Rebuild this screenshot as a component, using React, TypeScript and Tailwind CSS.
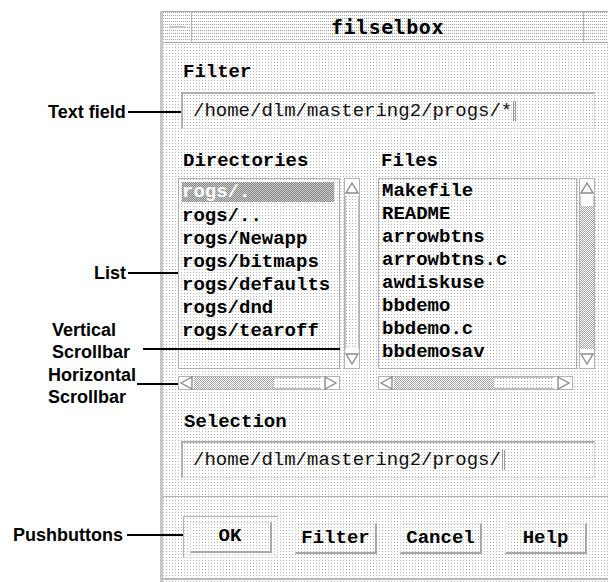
import React from 'react'

const mono = "font-['Liberation_Mono','Courier_New',monospace]"
const dots = 'bg-white bg-[conic-gradient(at_1px_1px,transparent_75%,#b4b4b4_0)] bg-[length:3px_3px]'
const dense = 'bg-white bg-[conic-gradient(at_1px_1px,transparent_75%,#a2a2a2_0)] bg-[length:2px_3px]'
const trough = 'bg-[repeating-conic-gradient(#a4a4a4_0_25%,#ffffff_0_50%)] bg-[length:2px_2px]'
const callout = "font-['Liberation_Sans',Arial,sans-serif] font-bold text-[18px] leading-[17px] text-black"

type Dir = 'up' | 'down' | 'left' | 'right'

function Arrow({ dir }: { dir: Dir }) {
  const pts = {
    up: '7,2 13,12 1,12',
    down: '1,2 13,2 7,12',
    left: '1,7 12,1 12,13',
    right: '2,1 13,7 2,13',
  }[dir]
  return (
    <svg width="14" height="14" viewBox="0 0 14 14">
      <polygon points={pts} fill="#ffffff" stroke="#8c8c8c" strokeWidth="1.4" />
    </svg>
  )
}

function VScroll({ full }: { full?: boolean }) {
  return (
    <div className="flex flex-col w-[16px] h-full border border-[#b3b3b3]">
      <div className="h-[17px] flex items-center justify-center bg-white">
        <Arrow dir="up" />
      </div>
      {full ? (
        <div className={`flex-1 ${dots} border-x border-[#c4c4c4]`} />
      ) : (
        <>
          <div className="h-[10px] bg-white border-x border-[#c4c4c4]" />
          <div className={`flex-1 ${trough}`} />
        </>
      )}
      <div className="h-[19px] flex items-center justify-center bg-white">
        <Arrow dir="down" />
      </div>
    </div>
  )
}

function HScroll({ width, before, slider }: { width: number; before: number; slider: number }) {
  return (
    <div className="flex h-[14px] border border-[#b3b3b3]" style={{ width }}>
      <div className="w-[15px] flex items-center justify-center bg-white">
        <Arrow dir="left" />
      </div>
      <div className={trough} style={{ width: before }} />
      <div className={`${dots} border-y border-[#c4c4c4]`} style={{ width: slider }} />
      <div className="flex-1 flex items-center justify-center bg-white">
        <Arrow dir="right" />
      </div>
    </div>
  )
}

function Field({ value }: { value: string }) {
  return (
    <div
      className={`ml-[3px] w-[414px] h-[37px] flex items-center pl-[10px] border-t-2 border-l-2 border-[#b0b0b0] border-r border-b border-r-[#dcdcdc] border-b-[#dcdcdc] ${mono} text-[19px] text-[#111]`}
    >
      <span className="whitespace-pre">{value}</span>
      <span className="inline-block w-[3px] h-[20px] border-x border-[#9a9a9a] ml-px" />
    </div>
  )
}

function Button({ label }: { label: string }) {
  return (
    <div
      className={`w-[82px] h-[31px] flex items-center justify-center border-t border-l border-[#e6e6e6] border-r-2 border-b-2 border-r-[#a8a8a8] border-b-[#a8a8a8] ${mono} font-bold text-[19px]`}
    >
      {label}
    </div>
  )
}

export default function App() {
  const dirs = ['rogs/.', 'rogs/..', 'rogs/Newapp', 'rogs/bitmaps', 'rogs/defaults', 'rogs/dnd', 'rogs/tearoff']
  const files = ['Makefile', 'README', 'arrowbtns', 'arrowbtns.c', 'awdiskuse', 'bbdemo', 'bbdemo.c', 'bbdemosav']

  return (
    <div className="relative w-[608px] h-[582px] bg-white overflow-hidden text-black">
      <div className="flex h-full pl-[160px] pt-[11px]">
        <div className={`flex-1 flex flex-col border-l-[3px] border-[#c6c6c6] ${dots}`}>
          {/* title bar */}
          <div className="flex h-[32px] border-y border-[#a8a8a8]">
            <div className={`w-[29px] flex items-center justify-center border-r border-[#b5b5b5] ${dense}`}>
              <div className="w-[15px] h-[2px] bg-[#c6c6c6]" />
            </div>
            <div
              className={`flex-1 flex items-center justify-center ${dense} font-['DejaVu_Sans_Mono',monospace] font-bold text-[20px] tracking-[0.5px]`}
            >
              filselbox
            </div>
            <div className={`w-[25px] border-l border-[#b5b5b5] ${dense}`} />
          </div>

          {/* body */}
          <div className={`flex flex-col pl-[15px] pt-[19px] ${mono} text-[19px]`}>
            <div className="ml-[5px] leading-[20px] font-bold">Filter</div>
            <div className="mt-[10px]">
              <Field value="/home/dlm/mastering2/progs/*" />
            </div>

            <div className="flex mt-[22px] leading-[20px] font-bold">
              <div className="w-[200px] pl-[5px]">Directories</div>
              <div className="pl-[3px]">Files</div>
            </div>

            <div className="flex mt-[7px] h-[191px]">
              <div className="flex w-[182px] gap-[4px]">
                <div className="w-[162px] border border-[#b0b0b0] overflow-hidden pt-[1px] font-bold">
                  {dirs.map((d, i) => (
                    <div key={d} className="h-[23px] leading-[23px] pl-[3px] pr-[5px]">
                      <div
                        className={
                          i === 0
                            ? 'bg-[repeating-conic-gradient(#8a8a8a_0_25%,#c9c9c9_0_50%)] bg-[length:2px_2px] text-white h-[20px] leading-[20px] mt-[2px] pl-[2px]'
                            : 'pl-[2px]'
                        }
                      >
                        <span className="-ml-[2px]">{d}</span>
                      </div>
                    </div>
                  ))}
                </div>
                <VScroll full />
              </div>
              <div className="flex ml-[18px] gap-[2px]">
                <div className="w-[199px] border border-[#b0b0b0] overflow-hidden pt-[1px] pl-[3px] font-bold">
                  {files.map(f => (
                    <div key={f} className="h-[23px] leading-[23px]">{f}</div>
                  ))}
                </div>
                <VScroll />
              </div>
            </div>

            <div className="flex mt-[7px]">
              <HScroll width={162} before={80} slider={47} />
              <div className="ml-[38px]">
                <HScroll width={195} before={100} slider={60} />
              </div>
            </div>

            <div className="ml-[6px] mt-[22px] leading-[20px] font-bold">Selection</div>
            <div className="mt-[9px]">
              <Field value="/home/dlm/mastering2/progs/" />
            </div>
          </div>

          <div className="mt-[18px] border-t border-[#b3b3b3]" />

          <div className="flex pl-[20px] pt-[19px]">
            <div className="w-[95px] h-[42px] flex items-center justify-center border-t border-l border-[#b3b3b3] border-r border-b border-r-[#e0e0e0] border-b-[#e0e0e0]">
              <Button label="OK" />
            </div>
            <div className="ml-[17px] mt-[7px] flex gap-[23px]">
              <Button label="Filter" />
              <Button label="Cancel" />
              <Button label="Help" />
            </div>
          </div>

          <div className="mt-[20px] border-t-2 border-[#b8b8b8]" />
        </div>
      </div>

      {/* callouts */}
      <div className={`absolute left-[48px] top-[104px] ${callout}`}>Text field</div>
      <div className="absolute left-[128px] top-[111px] w-[53px] h-[2px] bg-black" />

      <div className={`absolute left-[94px] top-[265px] ${callout}`}>List</div>
      <div className="absolute left-[128px] top-[272px] w-[50px] h-[2px] bg-black" />

      <div className={`absolute left-[52px] top-[322px] ${callout}`}>Vertical</div>
      <div className={`absolute left-[52px] top-[344px] ${callout}`}>Scrollbar</div>
      <div className="absolute left-[143px] top-[348px] w-[197px] h-[2px] bg-black" />

      <div className={`absolute left-[48px] top-[367px] ${callout}`}>Horizontal</div>
      <div className={`absolute left-[48px] top-[389px] ${callout}`}>Scrollbar</div>
      <div className="absolute left-[137px] top-[383px] w-[41px] h-[2px] bg-black" />

      <div className={`absolute left-[13px] top-[527px] ${callout}`}>Pushbuttons</div>
      <div className="absolute left-[127px] top-[534px] w-[56px] h-[2px] bg-black" />
    </div>
  )
}
